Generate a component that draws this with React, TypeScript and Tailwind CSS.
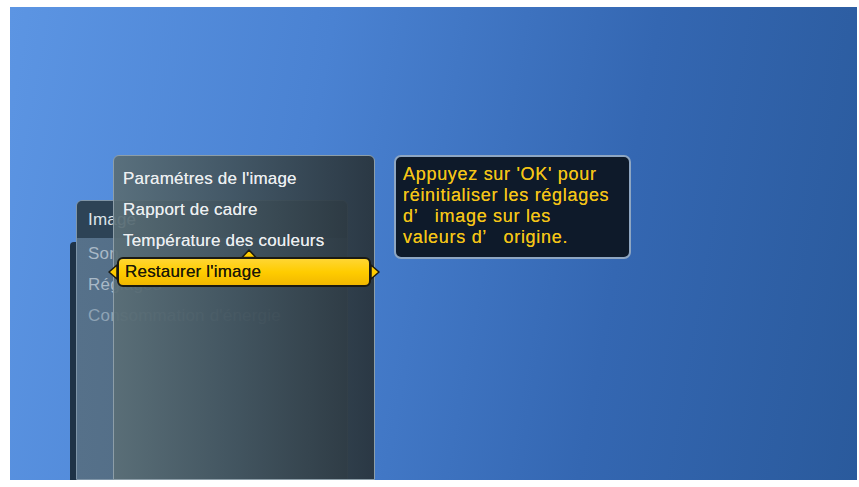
import React from "react";

const Tri = ({ dir }: { dir: "left" | "right" | "up" }) => {
  if (dir === "up")
    return (
      <svg width="16" height="9" viewBox="0 0 16 9">
        <polygon points="1,8.5 8,1 15,8.5" fill="#ffcc00" stroke="#1b1a12" strokeWidth="1.5" strokeLinejoin="round" />
      </svg>
    );
  const pts = dir === "left" ? "9,1 1,8 9,15" : "1,1 9,8 1,15";
  return (
    <svg width="10" height="16" viewBox="0 0 10 16">
      <polygon points={pts} fill="#ffcc00" stroke="#1b1a12" strokeWidth="1.5" strokeLinejoin="round" />
    </svg>
  );
};

export default function App() {
  const font = { fontFamily: '"Liberation Sans", Arial, sans-serif' };
  return (
    <div className="w-[859px] h-[487px] bg-white pt-[7px] pl-[10px] pr-[2px] pb-[7px]" style={font}>
      <div className="relative w-[847px] h-[473px] overflow-hidden bg-[linear-gradient(100deg,#5c95e3_0%,#4a82d2_35%,#3467b2_70%,#2a5a9c_100%)] flex items-start pt-[148px] pl-[103px]">
        {/* third-level panel sliver */}
        <div className="absolute left-[60px] top-[235px] bottom-0 w-[7px] rounded-tl-[4px] bg-[#1f3347]" />
        {/* back panel */}
        <div className="absolute left-[66px] top-[193px] bottom-0 w-[272px] rounded-t-[6px] border border-[#7f95a8] bg-[linear-gradient(90deg,#56718a,#4a6580)] flex flex-col text-[17px] tracking-[0.2px]">
          <div className="h-[37px] rounded-t-[5px] bg-[#2d4356] flex items-center pl-[11px] text-[#dde4ea]">Image</div>
          <div className="h-[31px] flex items-center pl-[11px] text-[#a9b9c7]">Son</div>
          <div className="h-[31px] flex items-center pl-[11px] text-[#a9b9c7]">Réglages</div>
          <div className="h-[31px] flex items-center pl-[11px] text-[#8ea3b5]">Consommation d'énergie</div>
        </div>
        {/* main panel */}
        <div className="relative z-10 w-[262px] h-[325px] rounded-t-[6px] border border-[#8d9ea8] bg-[linear-gradient(90deg,rgba(90,110,118,0.93)_0%,rgba(66,84,94,0.93)_45%,rgba(41,52,60,0.94)_100%)] pt-[7px] flex flex-col text-[17px] tracking-[0.2px] text-[#eceff1] [text-shadow:0_0_0.6px_rgba(236,239,241,0.8)]">
          <div className="h-[31px] flex items-center pl-[9px]">Paramétres de l'image</div>
          <div className="h-[31px] flex items-center pl-[9px]">Rapport de cadre</div>
          <div className="relative h-[31px] flex items-center pl-[9px]">
            Température des couleurs
            <div className="absolute left-[127px] bottom-[-2px] leading-none">
              <Tri dir="up" />
            </div>
          </div>
          <div className="relative h-[31px] flex items-center">
            <div className="absolute left-[-6px] top-[8px] leading-none">
              <Tri dir="left" />
            </div>
            <div className="ml-[3px] w-[254px] h-[30px] rounded-[6px] border-2 border-[#1b1a12] bg-[linear-gradient(180deg,#ffd633_0%,#ffcc00_50%,#f2b800_100%)] flex items-center pl-[6px] text-[#1a1708] [text-shadow:0_0_0.6px_rgba(26,23,8,0.8)]">
              Restaurer l'image
            </div>
            <div className="absolute right-[-6px] top-[8px] leading-none">
              <Tri dir="right" />
            </div>
          </div>
        </div>
        {/* info box */}
        <div className="relative z-10 ml-[19px] w-[237px] h-[104px] rounded-[7px] border-2 border-[#8ea6c2] bg-[#0e1a2a] pt-[7px] pl-[7px] text-[18px] leading-[21px] tracking-[0.7px] text-[#f5c517] whitespace-pre [text-shadow:0_0_0.6px_rgba(245,197,23,0.8)]">
          <div>Appuyez sur 'OK' pour</div>
          <div>réinitialiser les réglages</div>
          <div>{"d’   image sur les"}</div>
          <div>{"valeurs d’   origine."}</div>
        </div>
      </div>
    </div>
  );
}
